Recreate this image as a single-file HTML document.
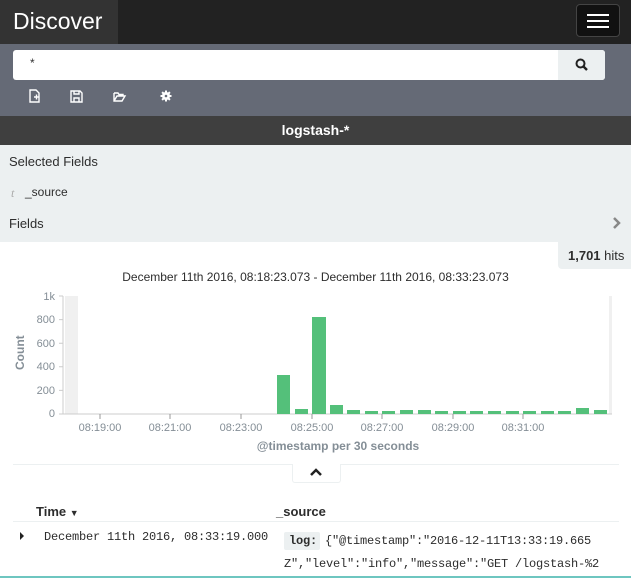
<!DOCTYPE html>
<html><head><meta charset="utf-8"><style>
*{margin:0;padding:0;box-sizing:border-box}
body{width:631px;height:578px;overflow:hidden;background:#fff;font-family:"Liberation Sans",sans-serif;position:relative;color:#2d2d2d}
.a{position:absolute}
.m{font-family:'Liberation Mono',monospace;font-size:12px;letter-spacing:-0.2px}
</style></head><body>
<div class="a" style="left:0;top:0;width:631px;height:44px;background:#222"></div>
<div class="a" style="left:0;top:0;width:118px;height:44px;background:#333;color:#fff;font-size:23px;padding:8px 0 0 13px">Discover</div>
<div class="a" style="left:576px;top:4px;width:44px;height:33px;border:1px solid #444;border-radius:4px;background:#111">
 <div class="a" style="left:10px;top:9px;width:22px;height:2px;background:#fff"></div>
 <div class="a" style="left:10px;top:15px;width:22px;height:2px;background:#fff"></div>
 <div class="a" style="left:10px;top:21px;width:22px;height:2px;background:#fff"></div>
</div>
<div class="a" style="left:0;top:44px;width:631px;height:72px;background:#656a76"></div>
<div class="a" style="left:13px;top:50px;width:592px;height:30px;background:#fff;border-radius:3px"></div>
<div class="a" style="left:558px;top:50px;width:47px;height:30px;background:#ecf0f1;border-radius:0 3px 3px 0"></div>
<div class="a" style="left:30px;top:56px;font-size:12px;color:#333">*</div>
<svg class="a" style="left:575px;top:58px" width="14" height="14" viewBox="0 0 14 14"><circle cx="5.5" cy="5.5" r="4" fill="none" stroke="#222" stroke-width="2"/><path d="M8.5 8.5L12 12" stroke="#222" stroke-width="2.4"/></svg>
<svg class="a" style="left:28px;top:88px" width="160" height="16" viewBox="0 0 160 16" fill="none" stroke="#fff" stroke-width="1.4">
 <path d="M2 2h6l3 3v9H2z"/><path d="M6 9h5M8.5 6.5v5"/>
 <path d="M43 3h9l2 2v9H43z"/><path d="M46 3v3h5V3M46 14v-4h5v4"/>
 <path d="M86 5h4l1 1.5h4v2M86 5v8h8l3-5H89l-3 5"/>
 <g stroke="none" fill="#fff"><circle cx="138" cy="8" r="4"/><rect x="137" y="2.5" width="2" height="11"/><rect x="132.5" y="7" width="11" height="2"/><rect x="137" y="2.5" width="2" height="11" transform="rotate(45 138 8)"/><rect x="137" y="2.5" width="2" height="11" transform="rotate(-45 138 8)"/></g>
 <circle cx="138" cy="8" r="1.3" fill="#656a76" stroke="none"/>
</svg>
<div class="a" style="left:0;top:116px;width:631px;height:29px;background:#3f3f3f;color:#fff;font-weight:bold;font-size:14px;text-align:center;line-height:29px">logstash-*</div>
<div class="a" style="left:0;top:145px;width:631px;height:97px;background:#ecf0f1"></div>
<div class="a" style="left:9px;top:154px;font-size:13px">Selected Fields</div>
<div class="a" style="left:11px;top:186px;font-size:12px;color:#aaa;font-style:italic;font-family:'Liberation Serif',serif">t</div>
<div class="a" style="left:25px;top:185px;font-size:12px">_source</div>
<div class="a" style="left:9px;top:216px;font-size:13px">Fields</div>
<svg class="a" style="left:612px;top:216px" width="10" height="14"><path d="M2 2l5 5-5 5" stroke="#888" stroke-width="2.5" fill="none"/></svg>
<div class="a" style="left:558px;top:242px;width:73px;height:27px;background:#ecf0f1;border-radius:0 0 0 4px;font-size:13px;padding:6px 0 0 10px"><b>1,701</b> hits</div>
<div class="a" style="left:0;top:270px;width:631px;text-align:center;font-size:12px">December 11th 2016, 08:18:23.073 - December 11th 2016, 08:33:23.073</div>
<svg class="a" style="left:0;top:285px" width="631" height="175" viewBox="0 285 631 175" font-family="Liberation Sans" font-size="11" fill="#848e96">
 <rect x="65" y="296" width="547" height="118" fill="#fff"/>
 <rect x="65" y="296" width="13" height="118" fill="#f0f0f0"/>
 <rect x="609" y="296" width="3" height="118" fill="#f0f0f0"/>
 <path d="M63 296v118h549" stroke="#ccc" fill="none"/>
 <g text-anchor="end"><text x="55" y="300">1k</text><text x="55" y="323">800</text><text x="55" y="347">600</text><text x="55" y="370">400</text><text x="55" y="394">200</text><text x="55" y="417">0</text></g>
 <path d="M59 296h4M59 319.6h4M59 343.2h4M59 366.8h4M59 390.4h4M59 414h4" stroke="#ccc"/>
 <text transform="translate(24 370) rotate(-90)" font-weight="bold" font-size="12">Count</text>
 <g fill="#54c07a">
 <rect x="277" y="375" width="13" height="39"/><rect x="295" y="409" width="13" height="5"/><rect x="312" y="317" width="14" height="97"/><rect x="330" y="405" width="13" height="9"/>
 <rect x="347" y="410" width="13" height="4"/><rect x="365" y="411" width="13" height="3"/><rect x="382" y="411" width="13" height="3"/><rect x="400" y="410" width="13" height="4"/><rect x="418" y="410" width="13" height="4"/><rect x="435" y="411" width="13" height="3"/><rect x="453" y="411" width="13" height="3"/><rect x="470" y="411" width="13" height="3"/><rect x="488" y="411" width="13" height="3"/><rect x="506" y="411" width="13" height="3"/><rect x="523" y="411" width="13" height="3"/><rect x="541" y="411" width="13" height="3"/><rect x="558" y="411" width="13" height="3"/><rect x="576" y="408" width="13" height="6"/><rect x="594" y="410" width="13" height="4"/>
 </g>
 <g stroke="#999"><path d="M100 414v5M170 414v5M241 414v5M312 414v5M382 414v5M453 414v5M523 414v5"/></g>
 <g text-anchor="middle"><text x="100" y="431">08:19:00</text><text x="170" y="431">08:21:00</text><text x="241" y="431">08:23:00</text><text x="312" y="431">08:25:00</text><text x="382" y="431">08:27:00</text><text x="453" y="431">08:29:00</text><text x="523" y="431">08:31:00</text>
 <text x="338" y="450" font-weight="bold" font-size="12">@timestamp per 30 seconds</text></g>
</svg>
<div class="a" style="left:13px;top:464px;width:606px;height:1px;background:#ecf0f1"></div>
<div class="a" style="left:292px;top:464px;width:49px;height:19px;background:#fff;border:1px solid #ecf0f1;border-top:none;border-radius:0 0 3px 3px"></div>
<svg class="a" style="left:309px;top:467px" width="14" height="10"><path d="M2 8l5-5 5 5" stroke="#222" stroke-width="2.5" fill="none"/></svg>
<div class="a" style="left:36px;top:504px;font-size:13px;font-weight:bold">Time <span style="font-size:9px">▼</span></div>
<div class="a" style="left:276px;top:504px;font-size:13px;font-weight:bold">_source</div>
<div class="a" style="left:13px;top:521px;width:606px;height:1px;background:#ecf0f1"></div>
<div class="a" style="left:20px;top:532px;width:0;height:0;border-left:4px solid #222;border-top:4px solid transparent;border-bottom:4px solid transparent"></div>
<div class="a m" style="left:44px;top:530px">December 11th 2016, 08:33:19.000</div>
<div class="a m" style="left:284px;top:532px;width:36px;height:18px;background:#ecf0f1;border-radius:2px;font-weight:bold;padding:2px 0 0 5px">log:</div>
<div class="a m" style="left:325px;top:534px">{"@timestamp":"2016-12-11T13:33:19.665</div>
<div class="a m" style="left:284px;top:557px">Z","level":"info","message":"GET /logstash-%2</div>
<div class="a" style="left:0;top:576px;width:631px;height:2px;background:#6ec6c0"></div>
</body></html>
